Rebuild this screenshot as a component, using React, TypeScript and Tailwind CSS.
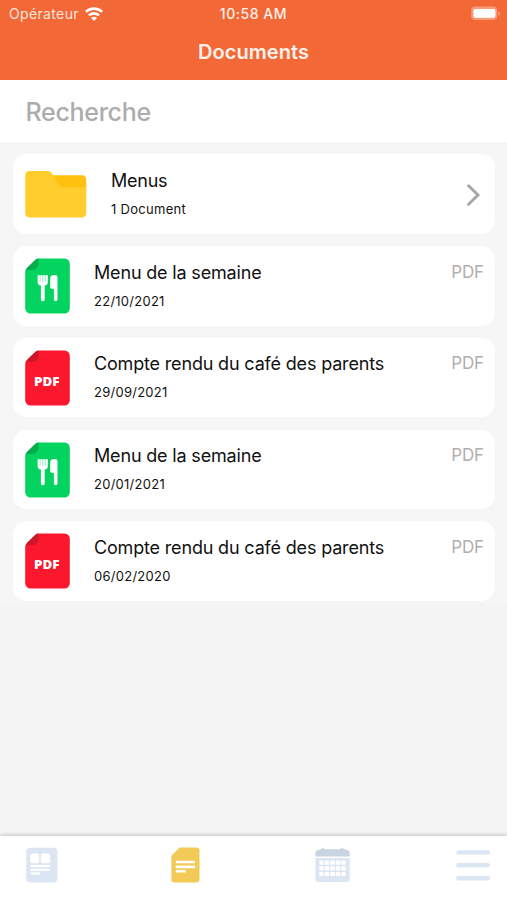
import React from 'react';

type DocumentKind = 'menu' | 'pdf';

type DocumentItem = {
  id: number;
  kind: DocumentKind;
  title: string;
  date: string;
};

const documents: DocumentItem[] = [
  { id: 1, kind: 'menu', title: 'Menu de la semaine', date: '22/10/2021' },
  { id: 2, kind: 'pdf', title: 'Compte rendu du café des parents', date: '29/09/2021' },
  { id: 3, kind: 'menu', title: 'Menu de la semaine', date: '20/01/2021' },
  { id: 4, kind: 'pdf', title: 'Compte rendu du café des parents', date: '06/02/2020' },
];

const WifiIcon = () => (
  <svg className="w-[18px] h-[14px]" viewBox="0 0 18 14" fill="none" stroke="#fff" strokeWidth="2.7">
    <path d="M0.9 4.9a11.5 11.5 0 0 1 16.2 0" />
    <path d="M3.9 8.4a7.2 7.2 0 0 1 10.2 0" />
    <path d="M9 13.8L6 10.9a4.2 4.2 0 0 1 6 0z" fill="#fff" stroke="none" />
  </svg>
);

const BatteryIcon = () => (
  <svg className="w-[31px] h-[15px]" viewBox="0 0 31 15">
    <rect x="0.2" y="0.6" width="26" height="13.4" rx="3.8" fill="#f69a78" />
    <rect x="2.4" y="2.9" width="22" height="8.8" rx="1.8" fill="#fff" />
    <path d="M27.4 5.2c2.4 0.8 2.4 3.8 0 4.6z" fill="#f69a78" />
  </svg>
);

const FolderIcon = () => (
  <svg className="w-[62px] h-[48px]" viewBox="0 0 62 48">
    <path d="M22 5.2h35a4.2 4.2 0 0 1 4.2 4.2v13H34z" fill="#ffc00f" />
    <path
      d="M4.5 1H22.6c2.6 0 3.4 1.2 4.8 3.2l5.2 8.8c1.8 3 4.2 4.2 7.6 4.2h16.6c2.6 0 4.4-0.2 4.4-2.4v28.6a4.2 4.2 0 0 1-4.2 4.2H4.5a4.2 4.2 0 0 1-4.2-4.2V5.2a4.2 4.2 0 0 1 4.2-4.2z"
      fill="#ffcd2c"
    />
  </svg>
);

const FileIcon: React.FC<{ kind: DocumentKind }> = ({ kind }) => {
  const isMenu = kind === 'menu';
  return (
    <svg className="w-[45px] h-[56px]" viewBox="0 0 45 56">
      <path
        d="M13.4 0.5H39.5a5.3 5.3 0 0 1 5.3 5.3v44.4a5.3 5.3 0 0 1-5.3 5.3h-34a5.3 5.3 0 0 1-5.3-5.3V13.4z"
        fill={isMenu ? '#03d35f' : '#fb172e'}
      />
      <path
        d="M13.6 0.6v4.6a6.6 6.6 0 0 1-6.6 6.8H3.4Q1.4 12.2 0.3 13.6 0.4 11.4 2 9.8L10 2Q11.5 0.6 13.6 0.6z"
        fill={isMenu ? '#06ad4e' : '#cd1628'}
      />
      {isMenu ? (
        <g fill="#fff">
          <path d="M12.6 17.2h10.2v7.2c0 1.7-1.1 2.8-3.1 3v14a1.9 1.9 0 0 1-3.8 0v-14c-2.1-0.2-3.3-1.3-3.3-3z" />
          <path d="M25.2 20.6c0-2.2 1.4-3.5 3.4-3.5h1.5c1.6 0 2.4 0.9 2.4 2.4v22a1.8 1.8 0 0 1-3.6 0V31h-1.6c-1.4 0-2.1-0.7-2.1-2z" />
          <path d="M15.2 17.2v6.6M17.7 17.2v6.6M20.2 17.2v6.6" stroke="#8debb6" strokeWidth="0.8" fill="none" />
        </g>
      ) : (
        <text
          x="21.7"
          y="36"
          textAnchor="middle"
          className="text-[13px] font-extrabold"
          fontFamily="'Open Sans', sans-serif"
          textLength="25.5"
          lengthAdjust="spacingAndGlyphs"
          fill="#fff"
        >
          PDF
        </text>
      )}
    </svg>
  );
};

const Chevron = () => (
  <svg className="w-[14px] h-[24px]" viewBox="0 0 14 24" fill="none" stroke="#a6a6a6" strokeWidth="2.9" strokeLinecap="round">
    <path d="M1.6 2.8L11 12 1.6 21.2" />
  </svg>
);

const NewsIcon = () => (
  <svg className="w-[32px] h-[36px]" viewBox="0 0 32 36">
    <rect x="0.3" y="0.8" width="31" height="34.6" rx="4" fill="#dce6f3" />
    <g fill="#fff">
      <rect x="4.2" y="6.6" width="9" height="9.6" rx="2" />
      <rect x="14.8" y="6.6" width="9.4" height="9.6" rx="2" />
      <rect x="4.2" y="17.9" width="20" height="2" rx="1" />
      <rect x="4.2" y="21.7" width="19.4" height="2" rx="1" />
      <rect x="4.2" y="25.4" width="10" height="2" rx="1" />
    </g>
  </svg>
);

const DocumentsIcon = () => (
  <svg className="w-[29px] h-[36px]" viewBox="0 0 29 36">
    <path d="M8.6 0.5H25.2a3.3 3.3 0 0 1 3.3 3.3v28.4a3.3 3.3 0 0 1-3.3 3.3H3.7a3.3 3.3 0 0 1-3.3-3.3V8.8z" fill="#f1ca57" />
    <g fill="#fff">
      <rect x="4.6" y="13.8" width="19.6" height="2.5" rx="1.2" />
      <rect x="4.6" y="18.6" width="19.6" height="2.6" rx="1.2" />
      <rect x="4.6" y="23" width="10.2" height="2.6" rx="1.2" />
    </g>
  </svg>
);

const CalendarIcon = () => (
  <svg className="w-[35px] h-[36px]" viewBox="0 0 35 36">
    <path d="M0.4 9.4V6.2A3.4 3.4 0 0 1 3.4 3L5.4 2.2Q7.8 0.2 10.6 2.2H24.4Q27.2 0.2 29.6 2.2L31.5 3A3.4 3.4 0 0 1 34.7 6.2v3.2z" fill="#c8d4e1" />
    <path d="M0.4 10.9h34.3v20.6a3.6 3.6 0 0 1-3.6 3.6H4a3.6 3.6 0 0 1-3.6-3.6z" fill="#dce6f3" />
    <g fill="#fff">
      {[13.6, 19.3, 24.9].map((y) =>
        [4.3, 9.8, 15.3, 20.8, 26.3].map((x) => <rect key={`${x}-${y}`} x={x} y={y} width="4.4" height="4.2" rx="0.9" />)
      )}
    </g>
  </svg>
);

const MenuIcon = () => (
  <svg className="w-[34px] h-[32px]" viewBox="0 0 34 32" fill="#dce6f3">
    <rect x="0.2" y="0.2" width="33.8" height="4.4" rx="2.2" />
    <rect x="0.2" y="13" width="33.8" height="4.4" rx="2.2" />
    <rect x="0.2" y="26" width="33.8" height="4.4" rx="2.2" />
  </svg>
);

const DocumentCard: React.FC<{ document: DocumentItem }> = ({ document }) => (
  <li className="flex h-[79.5px] items-start rounded-[14px] bg-white pl-[12.5px] pr-[10.5px] pt-3">
    <FileIcon kind={document.kind} />
    <div className="ml-6 mt-[0.5px] flex-1">
      <h2 className="text-[18px] leading-7 tracking-[-0.17px]">{document.title}</h2>
      <p className="mt-[2px] text-[13px] leading-6 tracking-[0.26px]">{document.date}</p>
    </div>
    <span className="mt-[0.5px] text-[17px] leading-[26px] tracking-[-0.1px] text-[#b0b0b0]">PDF</span>
  </li>
);

export default function App() {
  return (
    <div className="flex h-[900px] w-[507px] flex-col overflow-hidden bg-[#f4f4f4] font-['Inter',sans-serif] text-[#111]">
      <header className="h-20 shrink-0 bg-[#f26836] text-white">
        <div className="grid h-[27px] grid-cols-3 items-center pl-[9px] pr-[5px] text-[14px]">
          <div className="flex items-center gap-[6px] text-[#ffe4da]">
            <span className="tracking-[0.35px]">Opérateur</span>
            <WifiIcon />
          </div>
          <span className="-ml-1 text-center font-medium tracking-[0.55px] text-[#fff0ea]">10:58 AM</span>
          <div className="flex justify-end">
            <BatteryIcon />
          </div>
        </div>
        <h1 className="text-center text-[20px] font-semibold leading-[50px] tracking-[0.05px] text-[#fff1eb]">Documents</h1>
      </header>

      <div className="h-[62px] shrink-0 bg-white">
        <input
          type="text"
          placeholder="Recherche"
          className="h-full w-full pl-[25.5px] pt-px text-[25px] font-medium tracking-[-0.3px] outline-none placeholder:text-[#acacac]"
        />
      </div>

      <main className="flex-1">
        <ul className="flex flex-col gap-[12.2px] bg-[#f6f6f6] px-[12.5px] pb-[3px] pt-3">
          <li className="flex h-20 items-start rounded-[14px] bg-white pl-[12.5px] pr-[14px] pt-4">
            <FolderIcon />
            <div className="-mt-[3px] ml-6 flex-1">
              <h2 className="text-[18px] leading-7 tracking-[-0.25px]">Menus</h2>
              <p className="mt-[2px] text-[13px] leading-6 tracking-[0.3px]">1 Document</p>
            </div>
            <div className="mt-[13px]">
              <Chevron />
            </div>
          </li>
          {documents.map((document) => (
            <DocumentCard key={document.id} document={document} />
          ))}
        </ul>
      </main>

      <nav className="flex h-16 shrink-0 items-start bg-white pl-[26px] pt-[11px] shadow-[0_-1px_4px_rgba(0,0,0,0.2)]">
        <NewsIcon />
        <div className="ml-[112.5px]">
          <DocumentsIcon />
        </div>
        <div className="ml-[115px]">
          <CalendarIcon />
        </div>
        <div className="ml-[106px] mt-[3px]">
          <MenuIcon />
        </div>
      </nav>
    </div>
  );
}
